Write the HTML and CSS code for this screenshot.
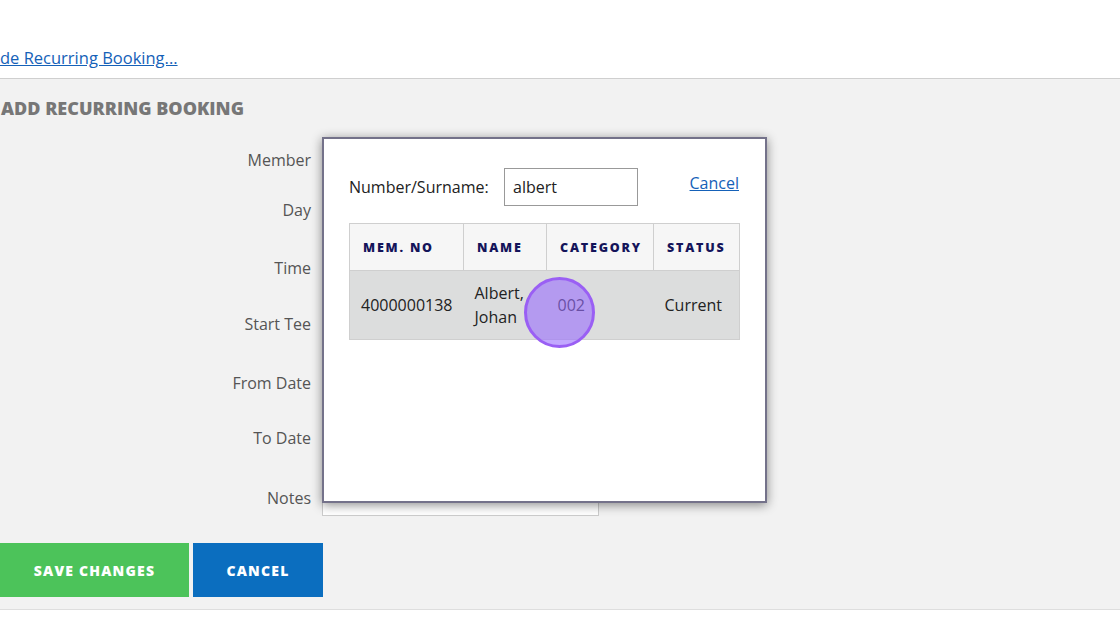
FILE: index.html
```
<!DOCTYPE html>
<html>
<head>
<meta charset="utf-8">
<link rel="stylesheet" href="styles.css">
</head>
<body>
<div class="topbar">
  <a href="#" class="toggle-link">de Recurring Booking...</a>
</div>
<div class="panel">
  <h2 class="panel-title">ADD RECURRING BOOKING</h2>
  <div class="form">
    <div class="row r-member"><label class="lbl">Member</label><div class="field"></div></div>
    <div class="row r-day"><label class="lbl">Day</label><div class="field"></div></div>
    <div class="row r-time"><label class="lbl">Time</label><div class="field"></div></div>
    <div class="row r-tee"><label class="lbl">Start Tee</label><div class="field"></div></div>
    <div class="row r-from"><label class="lbl">From Date</label><div class="field"></div></div>
    <div class="row r-to"><label class="lbl">To Date</label><div class="field"></div></div>
    <div class="row r-notes"><label class="lbl">Notes</label><div class="field"><div class="notes-input"></div></div></div>
  </div>
  <div class="actions">
    <button class="btn btn-save">SAVE CHANGES</button>
    <button class="btn btn-cancel">CANCEL</button>
  </div>
</div>

<div class="popup">
  <div class="search-row">
    <span class="search-label">Number/Surname:</span>
    <div class="search-input">albert</div>
    <a href="#" class="popup-cancel">Cancel</a>
  </div>
  <table class="results">
    <colgroup><col class="c1"><col class="c2"><col class="c3"><col class="c4"></colgroup>
    <thead>
      <tr><th>MEM. NO</th><th>NAME</th><th>CATEGORY</th><th>STATUS</th></tr>
    </thead>
    <tbody>
      <tr><td>4000000138</td><td>Albert,<br>Johan</td><td class="cat">002</td><td>Current</td></tr>
    </tbody>
  </table>
  <div class="click-marker"></div>
</div>
</body>
</html>
```
FILE: styles.css
```
* { box-sizing: border-box; }
html, body { margin: 0; padding: 0; }
body {
  width: 1120px;
  height: 626px;
  overflow: hidden;
  background: #fff;
  font-family: "Open Sans", "DejaVu Sans", sans-serif;
  color: #333;
  position: relative;
}
.topbar {
  height: 78px;
  padding-top: 47px;
}
.toggle-link {
  display: inline-block;
  font-size: 16.5px;
  line-height: 22px;
  color: #1561b8;
  text-decoration: underline;
}
.panel {
  background: #f2f2f2;
  border-top: 1px solid #cfcfcf;
  border-bottom: 1px solid #dedede;
  padding: 17px 0 12px 0;
}
.panel-title {
  margin: 0 0 29px 1px;
  font-size: 18px;
  line-height: 24px;
  font-weight: 800;
  color: #777;
}
.form { display: flex; flex-direction: column; }
.row {
  display: grid;
  grid-template-columns: 311px 288px;
  column-gap: 11px;
  align-items: start;
}
.lbl {
  text-align: right;
  font-size: 16px;
  line-height: 22px;
  color: #555;
}
.r-member { height: 50px; }
.r-day { height: 58px; }
.r-time { height: 56px; }
.r-tee { height: 59px; }
.r-from { height: 55px; }
.r-to { height: 53px; }
.r-notes { height: 36px; align-items: center; }
.notes-input {
  width: 277px;
  height: 36px;
  background: #fff;
  border: 1px solid #ccc;
}
.actions {
  display: flex;
  gap: 4px;
  margin-top: 27px;
}
.btn {
  height: 54px;
  border: none;
  color: #fff;
  font-family: "Open Sans", sans-serif;
  font-weight: 800;
  font-size: 14px;
  letter-spacing: 1.2px;
  padding: 0;
}
.btn-save { width: 189px; background: #4cc35a; }
.btn-cancel { width: 130px; background: #0b6ebf; }

.popup {
  position: absolute;
  left: 322px;
  top: 137px;
  width: 445px;
  height: 366px;
  background: #fff;
  border: 2px solid #74728a;
  box-shadow: 0 2px 10px rgba(0,0,0,0.45);
  padding: 29px 25px 0 25px;
}
.search-row {
  display: flex;
  align-items: center;
  height: 37px;
}
.search-label {
  font-size: 16px;
  color: #222;
  width: 155px;
}
.search-input {
  width: 134px;
  height: 38px;
  border: 1px solid #999;
  padding: 6px 8px;
  font-size: 16px;
  line-height: 24px;
  color: #222;
}
.popup-cancel {
  margin-left: auto;
  margin-right: 1px;
  font-size: 16px;
  color: #1561b8;
  text-decoration: underline;
  margin-top: -7px;
}
.results {
  margin-top: 18px;
  border-collapse: collapse;
  table-layout: fixed;
  width: 390px;
}
.c1 { width: 114px; }
.c2 { width: 83px; }
.c3 { width: 107px; }
.c4 { width: 86px; }
.results th {
  height: 47px;
  background: #f6f6f6;
  border: 1px solid #cfcfcf;
  text-align: left;
  padding: 0 0 0 13px;
  font-size: 12.5px;
  font-weight: 800;
  letter-spacing: 1.8px;
  color: #14145a;
}
.results td {
  height: 69px;
  background: #dcdddd;
  border-bottom: 1px solid #cfcfcf;
  padding: 0 0 0 11px;
  font-size: 16px;
  line-height: 24px;
  color: #222;
}
.results tbody tr td:first-child { border-left: 1px solid #cfcfcf; }
.results tbody tr td:last-child { border-right: 1px solid #cfcfcf; }
.click-marker {
  position: absolute;
  left: 200px;
  top: 138px;
  width: 71px;
  height: 71px;
  border-radius: 50%;
  background: rgba(153, 110, 253, 0.6);
  border: 3px solid #9a5ff4;
}
```
